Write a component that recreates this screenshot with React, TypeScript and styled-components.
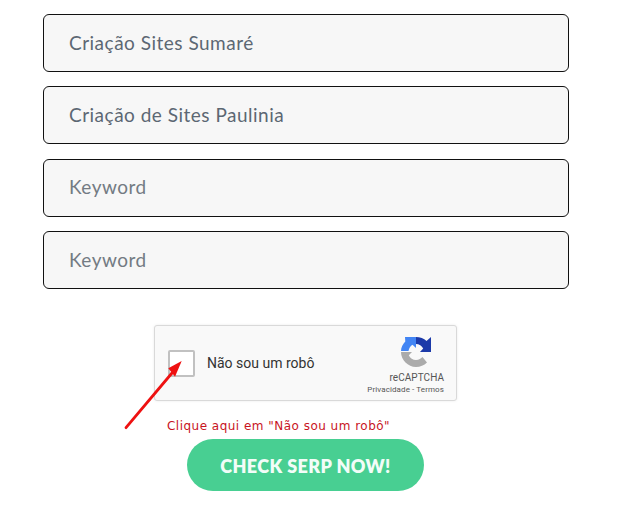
import React from 'react';
import styled, { createGlobalStyle } from 'styled-components';

const GlobalStyle = createGlobalStyle`
  html, body {
    margin: 0;
    padding: 0;
    background: #ffffff;
  }
`;

const Page = styled.div`
  width: 630px;
  height: 526px;
  padding: 14px 61px 0 43px;
  box-sizing: border-box;
  overflow: hidden;
  position: relative;
`;

const Fields = styled.div`
  display: flex;
  flex-direction: column;
  gap: 14.4px;
`;

const Field = styled.input`
  width: 100%;
  height: 58px;
  box-sizing: border-box;
  padding: 0 25px 2px;
  border: 1px solid #111111;
  border-radius: 6px;
  background: #f7f7f7;
  font-family: Lato, sans-serif;
  font-size: 19px;
  letter-spacing: 0.5px;
  color: #5c6773;
  outline: none;
  &::placeholder {
    color: #737b83;
    opacity: 1;
  }
`;

const Captcha = styled.div`
  width: 303px;
  height: 76px;
  margin: 36px 0 0 111px;
  box-sizing: border-box;
  padding: 0 12px 0 13px;
  display: flex;
  align-items: center;
  background: #f9f9f9;
  border: 1px solid #d9d9d9;
  border-radius: 3px;
  box-shadow: 0 0 3px rgba(0, 0, 0, 0.08);
`;

const CheckBox = styled.div`
  width: 27px;
  height: 27px;
  box-sizing: border-box;
  flex: none;
  background: #ffffff;
  border: 2px solid #c1c1c1;
  border-radius: 2px;
`;

const CaptchaLabel = styled.span`
  margin-left: 12px;
  flex: 1;
  font-family: Roboto, sans-serif;
  font-size: 14px;
  color: #333333;
`;

const Brand = styled.div`
  align-self: flex-start;
  display: flex;
  flex-direction: column;
  align-items: flex-end;
  padding-top: 11px;
`;

const BrandLogo = styled.svg`
  width: 30px;
  height: 30px;
  margin-right: 13px;
`;

const BrandName = styled.span`
  margin-top: 5px;
  font-family: Roboto, sans-serif;
  font-size: 10px;
  line-height: 12px;
  letter-spacing: 0.05px;
  color: #555555;
`;

const BrandLinks = styled.span`
  margin-top: 1px;
  font-family: Roboto, sans-serif;
  font-size: 8px;
  line-height: 10px;
  letter-spacing: 0.1px;
  color: #555555;
`;

const Hint = styled.div`
  margin: 17px 0 0 124px;
  font-family: "DejaVu Sans", Verdana, sans-serif;
  font-size: 12px;
  line-height: 16px;
  letter-spacing: 0.48px;
  color: #c8141e;
`;

const Submit = styled.button`
  display: block;
  width: 237px;
  height: 52px;
  margin: 5px 0 0 144px;
  padding: 2px 0 0;
  border: none;
  border-radius: 26px;
  background: #48cf92;
  font-family: Lato, sans-serif;
  font-weight: 800;
  font-size: 18px;
  letter-spacing: 0.4px;
  color: #f2fdf8;
`;

const Arrow = styled.svg`
  position: absolute;
  left: 120px;
  top: 355px;
  width: 65px;
  height: 80px;
`;

const App = () => {
  return (
    <Page>
      <GlobalStyle />
      <Fields>
        <Field readOnly value="Criação Sites Sumaré" />
        <Field readOnly value="Criação de Sites Paulinia" />
        <Field readOnly placeholder="Keyword" />
        <Field readOnly placeholder="Keyword" />
      </Fields>
      <Captcha>
        <CheckBox />
        <CaptchaLabel>Não sou um robô</CaptchaLabel>
        <Brand>
          <BrandLogo viewBox="0 0 30 30">
            <path d="M15 0 C19 0 23 1.5 25.5 4 L30 0 V15 H19 L22.2 11.6 C21 9 18 7 15 7 Z" fill="#1c3aa9" />
            <path d="M15 0 V11 L11.5 7.8 C9.5 9 8 11 7.5 14 H0 C0 10 2 6.8 4.3 4.4 L4 0 Z" fill="#4285f4" />
            <path d="M0 15 H11 L7.8 18.2 C9 21 12 23 15 23 C18 23 20 21.5 21.5 20 L26 25.5 C23 28.3 19.3 30 15 30 C7 30 0 23 0 15 Z" fill="#ababab" />
          </BrandLogo>
          <BrandName>reCAPTCHA</BrandName>
          <BrandLinks>Privacidade - Termos</BrandLinks>
        </Brand>
      </Captcha>
      <Hint>Clique aqui em "Não sou um robô"</Hint>
      <Submit>CHECK SERP NOW!</Submit>
      <Arrow viewBox="0 0 65 80">
        <line x1="6" y1="72.7" x2="52" y2="18" stroke="#ee1111" strokeWidth="2.8" strokeLinecap="round" />
        <polygon points="61.7,6 55,21.7 48.3,13.3" fill="#ee1111" />
      </Arrow>
    </Page>
  );
};

export default App;
